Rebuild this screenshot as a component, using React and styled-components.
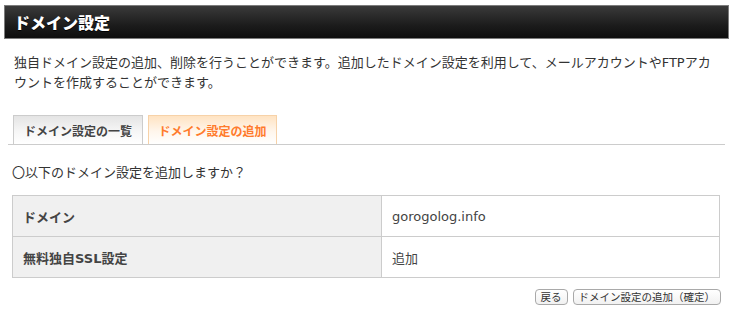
import React from 'react';
import styled, { createGlobalStyle } from 'styled-components';

const GlobalStyle = createGlobalStyle`
  body {
    margin: 0;
    background: #fff;
    font-family: "DejaVu Sans", "Noto Sans CJK JP", sans-serif;
    color: #333;
  }
`;

const rows = [
  { label: 'ドメイン', value: 'gorogolog.info' },
  { label: '無料独自SSL設定', value: '追加' },
];

function App() {
  return (
    <Page>
      <GlobalStyle />
      <Header>
        <Header.Title>ドメイン設定</Header.Title>
      </Header>

      <Lead>
        独自ドメイン設定の追加、削除を行うことができます。追加したドメイン設定を利用して、メールアカウントやFTPアカウントを作成することができます。
      </Lead>

      <Tabs>
        <Tab>ドメイン設定の一覧</Tab>
        <Tab active>ドメイン設定の追加</Tab>
      </Tabs>

      <Question>〇以下のドメイン設定を追加しますか？</Question>

      <Table>
        <tbody>
          {rows.map((row) => (
            <tr key={row.label}>
              <Table.Label>{row.label}</Table.Label>
              <Table.Value>{row.value}</Table.Value>
            </tr>
          ))}
        </tbody>
      </Table>

      <Actions>
        <Button type="button">戻る</Button>
        <Button type="button">ドメイン設定の追加（確定）</Button>
      </Actions>
    </Page>
  );
}

const Page = styled.div`
  width: 725px;
  padding: 5px 4px 0;
`;

const Header = styled.div`
  height: 32px;
  border: 1px solid #7c7c7c;
  background: linear-gradient(to bottom, #3a3a3a 0%, #1c1c1c 60%, #0e0e0e 100%);
  display: flex;
  align-items: center;
  padding-left: 9px;
`;

Header.Title = styled.h1`
  margin: 0;
  color: #fff;
  font-family: "Noto Sans CJK JP", sans-serif;
  font-size: 16px;
  font-weight: 900;
  line-height: 20px;
  text-shadow: 0 1px 0 #000;
`;

const Lead = styled.p`
  margin: 14px 0 0;
  padding: 0 10px;
  font-size: 13px;
  line-height: 20px;
  color: #333;
`;

const Tabs = styled.div`
  display: flex;
  gap: 5px;
  margin: 22px 4px 0;
  padding-left: 5px;
  border-bottom: 1px solid #cccccc;
`;

const Tab = styled.div`
  width: ${({ active }) => (active ? '127px' : '128px')};
  height: 28px;
  display: flex;
  align-items: center;
  justify-content: center;
  border: 1px solid ${({ active }) => (active ? '#f7d2a8' : '#cccccc')};
  border-bottom: none;
  background: ${({ active }) => (active
    ? 'linear-gradient(to bottom, #ffe3c2 0%, #fff6ec 55%, #ffffff 100%)'
    : 'linear-gradient(to bottom, #e4e4e4 0%, #f6f6f6 55%, #ffffff 100%)')};
  color: ${({ active }) => (active ? '#ff7b2c' : '#444')};
  font-family: "Noto Sans CJK JP", sans-serif;
  font-size: 12px;
  font-weight: 700;
`;

const Question = styled.p`
  margin: 18px 0 0;
  padding-left: 8px;
  font-size: 13px;
  line-height: 20px;
  color: #333;
`;

const Table = styled.table`
  margin: 12px 9px 0 8px;
  width: 708px;
  border-collapse: collapse;
  table-layout: fixed;

  td {
    height: 40px;
    padding: 0 0 0 10px;
    border: 1px solid #cccccc;
    font-size: 13px;
    color: #444;
  }
`;

Table.Label = styled.td`
  width: 358px;
  background: #f0f0f0;
  font-weight: 700;
`;

Table.Value = styled.td`
  background: #fff;
`;

const Actions = styled.div`
  display: flex;
  justify-content: flex-end;
  gap: 5px;
  margin: 11px 8px 0 0;
`;

const Button = styled.button`
  height: 16px;
  padding: 0 5px;
  border: 1px solid #a9a9a9;
  border-radius: 4px;
  background: linear-gradient(to bottom, #ffffff 0%, #f1f1f1 100%);
  color: #333;
  font-family: "Noto Sans CJK JP", sans-serif;
  font-size: 10.5px;
  line-height: 14px;
  cursor: pointer;
`;

export default App;
